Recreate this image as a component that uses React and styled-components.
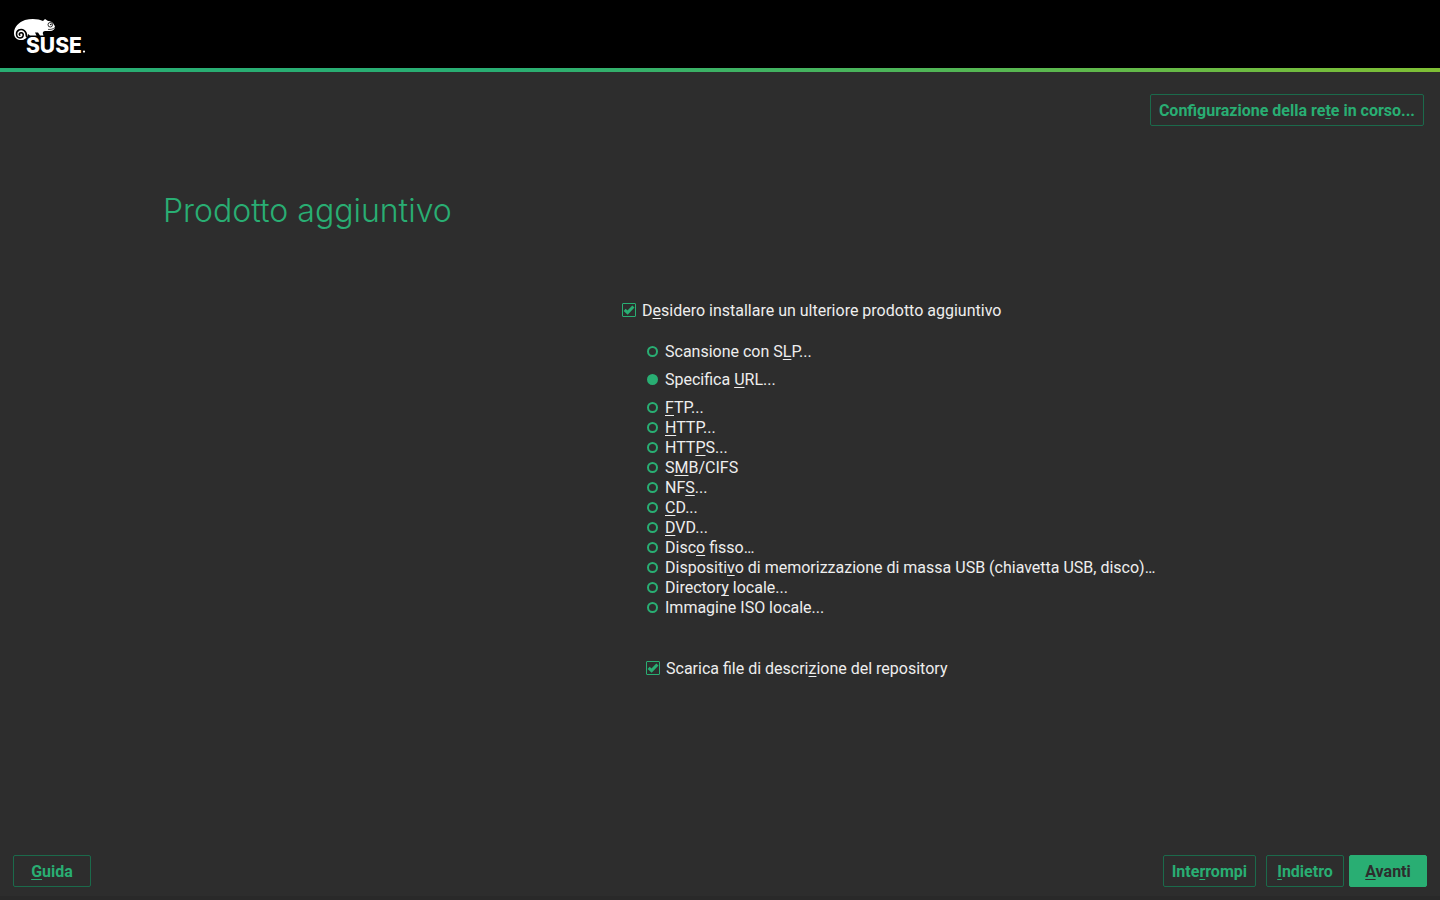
import React from "react";
import styled, { createGlobalStyle, css } from "styled-components";

const green = "#29ae73";
const dark = "#2d2d2d";

const GlobalStyle = createGlobalStyle`
  *, *::before, *::after { box-sizing: border-box; }
  body {
    margin: 0;
    background: ${dark};
    color: #eeeeee;
    font: 16px/20px Roboto, "Liberation Sans", sans-serif;
  }
`;

const Page = styled.div`
  min-height: 100vh;
  display: flex;
  flex-direction: column;
  border-bottom: 4px solid #292929;
`;

const Header = styled.header`
  background: #000;
  padding: 16px 12px 4px;
`;

const Logo = styled.svg`
  display: block;
  width: 80px;
  height: 48px;
  overflow: visible;
`;

const Wordmark = styled.text`
  font: 800 21px Inter, sans-serif;
  fill: #fff;
`;

const Stripe = styled.div`
  height: 4px;
  background: linear-gradient(90deg, #29ae73 0%, #29ae73 35%, #7fbf35 100%);
`;

const TopBar = styled.div`
  display: flex;
  justify-content: flex-end;
  padding: 22px 16px 0;
`;

const Button = styled.button`
  height: 32px;
  min-width: 78px;
  padding: 0 8px;
  border: 1px solid #1b6a4b;
  border-radius: 2px;
  background: transparent;
  color: ${green};
  font: 700 16px/20px Roboto, "Liberation Sans", sans-serif;
  ${(p) =>
    p.$primary &&
    css`
      border-color: ${green};
      background: ${green};
      color: ${dark};
    `}
`;

const Main = styled.main`
  flex: 1;
`;

const Title = styled.h1`
  margin: 65px 0 0 163px;
  color: ${green};
  font: 300 32px/40px Inter, "Open Sans", sans-serif;
  font-variant-ligatures: none;
`;

const FormGrid = styled.form`
  display: grid;
  grid-template-columns: 311fr 409fr;
  margin-top: 69px;
`;

const Fields = styled.div`
  grid-column: 2;
`;

const Nested = styled.div`
  padding-left: 24px;
`;

const Options = styled.fieldset`
  margin: 21px 0 41px;
  padding: 0;
  border: 0;
`;

const Choice = styled.label`
  display: flex;
  align-items: center;
  gap: 6px;
  height: 20px;
  margin-bottom: ${(p) => (p.$spaced ? 8 : 0)}px;
  white-space: nowrap;
`;

const Checkbox = styled.input.attrs({ type: "checkbox" })`
  appearance: none;
  flex: none;
  width: 14px;
  height: 14px;
  margin: 0;
  border: 1px solid ${green};
  border-radius: 1px;
  &:checked {
    background: center / 12px 12px no-repeat
      url("data:image/svg+xml,%3Csvg xmlns='http://www.w3.org/2000/svg' viewBox='0 0 12 12'%3E%3Cpath d='M1.6 5.8 4.6 8.6 10.4 2.4' fill='none' stroke='%2329ae73' stroke-width='3'/%3E%3C/svg%3E");
  }
`;

const Radio = styled.input.attrs({ type: "radio" })`
  appearance: none;
  flex: none;
  width: 11px;
  height: 11px;
  margin: 0 1px;
  border: 2px solid ${green};
  border-radius: 50%;
  &:checked {
    background: ${green};
  }
`;

const Caption = styled.span`
  display: inline-block;
  padding-top: 2px;
`;

const Key = styled.span`
  text-decoration: underline 1px;
  text-underline-offset: 2px;
  text-decoration-skip-ink: none;
`;

const Footer = styled.footer`
  display: flex;
  justify-content: space-between;
  padding: 9px 13px;
`;

const Actions = styled.div`
  display: flex;
  gap: 5px;
`;

const AbortButton = styled(Button)`
  margin-right: 5px;
`;

/* An underscore marks the accelerator letter that follows it. */
function Label({ text }) {
  const at = text.indexOf("_");
  if (at < 0) return <Caption>{text}</Caption>;
  return (
    <Caption>
      {text.slice(0, at)}
      <Key>{text[at + 1]}</Key>
      {text.slice(at + 2)}
    </Caption>
  );
}

const sources = [
  { text: "Scansione con S_LP...", spaced: true },
  { text: "Specifica _URL...", spaced: true },
  { text: "_FTP..." },
  { text: "_HTTP..." },
  { text: "HTT_PS..." },
  { text: "S_MB/CIFS" },
  { text: "NF_S..." },
  { text: "_CD..." },
  { text: "_DVD..." },
  { text: "Disc_o fisso…" },
  { text: "Dispositi_vo di memorizzazione di massa USB (chiavetta USB, disco)…" },
  { text: "Director_y locale..." },
  { text: "Immagine ISO locale..." },
];

function SuseLogo() {
  return (
    <Logo viewBox="0 0 80 48" role="img" aria-label="SUSE">
      <path
        fill="#fff"
        d="M2 17C2 11 7 6 13 4C20 2 27 3 31 5L33 3L36 5C39 5 42 7 43 11C43 13 41 15 38 15H34C31 15 30.5 16.5 31 18L31.5 19.5H28L26 16.5H23L24.5 19.5H18L16 18C15.4 22 12 24.6 8 24C4 23.4 2 21 2 17Z"
      />
      <path
        fill="none"
        stroke="#000"
        strokeWidth="1.5"
        strokeLinecap="round"
        d="M14.4 20.4C15 15.4 10.6 12.2 6.8 14C3.2 16.2 4 21.8 8 22C11.4 22 12.4 17.8 9.6 16.8C7.6 16.4 6.6 18.2 7.8 19.2"
      />
      <circle cx="38.3" cy="8.7" r="2.3" fill="none" stroke="#000" strokeWidth="0.8" />
      <circle cx="38.8" cy="8.5" r="0.8" fill="#000" />
      <path d="M36 13.4C39 13.7 41 13 43 11.5" fill="none" stroke="#000" strokeWidth="0.7" />
      <Wordmark x="14" y="37">SUSE</Wordmark>
      <circle cx="72" cy="35.6" r="1.1" fill="#fff" />
    </Logo>
  );
}

export default function App() {
  return (
    <>
      <GlobalStyle />
      <Page>
        <Header>
          <SuseLogo />
        </Header>
        <Stripe />
        <TopBar>
          <Button type="button">
            <Label text="Configurazione della re_te in corso..." />
          </Button>
        </TopBar>
        <Main>
          <Title>Prodotto aggiuntivo</Title>
          <FormGrid>
            <Fields>
              <Choice>
                <Checkbox defaultChecked />
                <Label text="D_esidero installare un ulteriore prodotto aggiuntivo" />
              </Choice>
              <Nested>
                <Options aria-label="Prodotto aggiuntivo">
                  {sources.map((s, i) => (
                    <Choice key={s.text} $spaced={s.spaced}>
                      <Radio name="source" defaultChecked={i === 1} />
                      <Label text={s.text} />
                    </Choice>
                  ))}
                </Options>
                <Choice>
                  <Checkbox defaultChecked />
                  <Label text="Scarica file di descri_zione del repository" />
                </Choice>
              </Nested>
            </Fields>
          </FormGrid>
        </Main>
        <Footer>
          <Button type="button">
            <Label text="_Guida" />
          </Button>
          <Actions>
            <AbortButton type="button">
              <Label text="Inte_rrompi" />
            </AbortButton>
            <Button type="button">
              <Label text="_Indietro" />
            </Button>
            <Button type="button" $primary>
              <Label text="_Avanti" />
            </Button>
          </Actions>
        </Footer>
      </Page>
    </>
  );
}
